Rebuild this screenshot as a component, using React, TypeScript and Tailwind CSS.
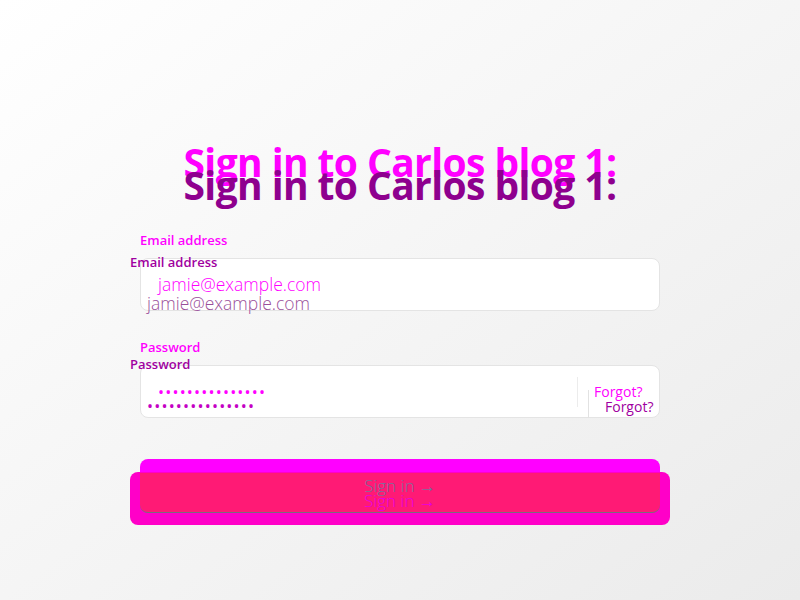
import React from 'react'

const font = { fontFamily: '"Open Sans", "Noto Sans", sans-serif' }

// bottom layer: bright magenta copy with the real boxes
const BackLayer = () => {
  return (
    <div className='[grid-area:1/1] w-[520px] mx-auto flex flex-col pt-[138px]'>
      <h1 className='h-[48px] leading-[48px] text-[39px] font-bold text-center text-[#ff00ff] tracking-[-0.6px]'>
        Sign in to Carlos blog 1:
      </h1>
      <label className='mt-[45px] h-[18px] leading-[18px] text-[13px] font-semibold text-[#ff00ff]'>Email address</label>
      <div className='mt-[9px] h-[53px] flex items-center pl-[17px] bg-white border border-[#e4e4e4] rounded-lg'>
        <span className='text-[17.5px] font-light text-[#ff00ff]'>jamie@example.com</span>
      </div>
      <label className='mt-[27px] h-[18px] leading-[18px] text-[13px] font-semibold text-[#ff00ff]'>Password</label>
      <div className='mt-[9px] h-[53px] flex items-center pl-[17px] bg-white border border-[#e4e4e4] rounded-lg'>
        <span className='flex-1 text-[16px] tracking-[1.2px] text-[#ff00ff]'>•••••••••••••••</span>
        <div className='w-px h-[30px] bg-[#ececec]'></div>
        <span className='w-[81px] pl-[16px] text-[14px] text-[#ff00ff]'>Forgot?</span>
      </div>
      <div className='mt-[41px] h-[54px] bg-[#ff00ff] rounded-lg'></div>
    </div>
  )
}

// top layer: shifted purple copy
const FrontLayer = () => {
  return (
    <div className='[grid-area:1/1] w-[540px] mx-auto flex flex-col pt-[161px]'>
      <h1 className='h-[48px] leading-[48px] text-[39px] font-bold text-center text-[#8e008e] tracking-[-0.6px]'>
        Sign in to Carlos blog 1:
      </h1>
      <label className='mt-[44px] h-[18px] leading-[18px] text-[13px] font-semibold text-[#a000a0]'>Email address</label>
      <span className='mt-[22px] h-[20px] leading-[20px] pl-[17px] text-[17.5px] font-light text-[#9a4f9a]'>jamie@example.com</span>
      <label className='mt-[42px] h-[18px] leading-[18px] text-[13px] font-semibold text-[#a000a0]'>Password</label>
      <div className='mt-[17px] h-[32px] flex items-start pl-[17px]'>
        <span className='flex-1 self-center text-[16px] tracking-[1.2px] text-[#c400c4]'>•••••••••••••••</span>
        <div className='w-px h-[28px] bg-[#e2e2e2]'></div>
        <span className='w-[81px] self-center pl-[16px] text-[14px] font-medium text-[#a000a0]'>Forgot?</span>
      </div>
      <div className='mt-[50px] h-[53px] flex px-[10px] pb-[12px] bg-[#ff00c8] rounded-lg'>
        <div className='flex-1 flex flex-col items-center justify-center mt-px bg-[#ff1a75] border-b border-[#7a6a80] rounded-b-lg'>
          <span className='leading-[15px] text-[17px] font-light text-[#7c6f9c]'>Sign in →</span>
          <span className='leading-[15px] text-[17px] font-light text-[#e600e6]'>Sign in →</span>
        </div>
      </div>
    </div>
  )
}

export default function App() {
  return (
    <div style={font} className='w-[800px] h-[600px] grid bg-gradient-to-br from-white to-[#ebebeb] overflow-hidden'>
      <BackLayer />
      <FrontLayer />
    </div>
  )
}
